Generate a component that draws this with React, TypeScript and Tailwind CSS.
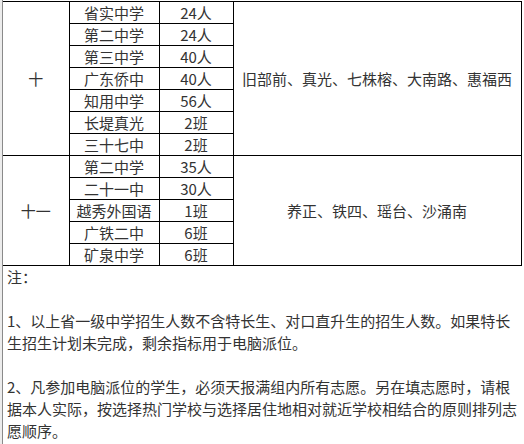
import React from "react";

const sec1: [string, string][] = [
  ["省实中学", "24人"],
  ["第二中学", "24人"],
  ["第三中学", "40人"],
  ["广东侨中", "40人"],
  ["知用中学", "56人"],
  ["长堤真光", "2班"],
  ["三十七中", "2班"],
];
const sec2: [string, string][] = [
  ["第二中学", "35人"],
  ["二十一中", "30人"],
  ["越秀外国语", "1班"],
  ["广铁二中", "6班"],
  ["矿泉中学", "6班"],
];

function Section({ label, rows, area }: { label: string; rows: [string, string][]; area: string }) {
  return (
    <>
      {rows.map((r, i) => (
        <tr key={i} className="h-[22px]">
          {i === 0 && (
            <td rowSpan={rows.length} className="border border-black border-l-0 text-center p-0 leading-[20px]">
              {label}
            </td>
          )}
          <td className="border border-black text-center p-0 whitespace-nowrap leading-[20px]">{r[0]}</td>
          <td className="border border-black text-center p-0 whitespace-nowrap leading-[20px]">{r[1]}</td>
          {i === 0 && (
            <td rowSpan={rows.length} className="border border-black text-center p-0 whitespace-nowrap leading-[20px]">
              {area}
            </td>
          )}
        </tr>
      ))}
    </>
  );
}

export default function App() {
  return (
    <div
      className="w-[524px] h-[444px] bg-white overflow-hidden flex text-[15px] leading-[22px] text-[#333333]"
      style={{ fontFamily: '"Noto Sans CJK SC", "Noto Sans", sans-serif' }}
    >
      <div className="w-[2px] bg-[#ececec] shrink-0" />
      <div className="w-[1px] bg-[#8a8a8a] shrink-0" />
      <div className="flex-1 flex flex-col">
        <table className="table-fixed border-collapse w-[518px] mt-[1px]">
          <colgroup>
            <col className="w-[66px]" />
            <col className="w-[90px]" />
            <col className="w-[74px]" />
            <col className="w-[288px]" />
          </colgroup>
          <tbody>
            <Section label="十" rows={sec1} area="旧部前、真光、七株榕、大南路、惠福西" />
            <Section label="十一" rows={sec2} area="养正、铁四、瑶台、沙涌南" />
          </tbody>
        </table>
        <div className="pl-[4px] pr-[4px]">
          <p>注：</p>
          <p>&nbsp;</p>
          <p>1、以上省一级中学招生人数不含特长生、对口直升生的招生人数。如果特长生招生计划未完成，剩余指标用于电脑派位。</p>
          <p>&nbsp;</p>
          <p>
            2、凡参加电脑派位的学生，必须天报满组内所有志愿。另在填志愿时，请根据本人实际，按选择热门学校与选择居住地相对就近学校相结合的原则排列志愿顺序。
          </p>
        </div>
      </div>
    </div>
  );
}
